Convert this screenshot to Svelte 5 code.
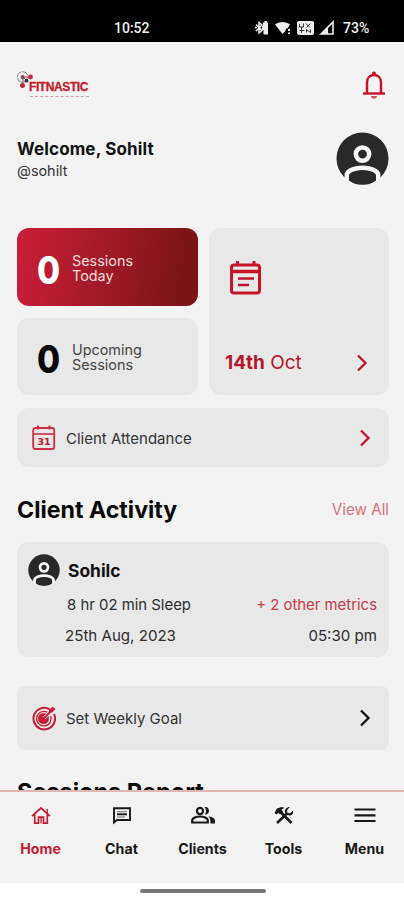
<script>
    const sessions = [
        { count: 0, lines: ['Sessions', 'Today'], active: true },
        { count: 0, lines: ['Upcoming', 'Sessions'], active: false }
    ];

    const tabs = ['Home', 'Chat', 'Clients', 'Tools', 'Menu'];
    let activeTab = $state('Home');
</script>

{#snippet chevron()}
    <svg class="chevron" width="12" height="18" viewBox="0 0 12 18">
        <path d="M2 1.5 9.5 9 2 16.5" fill="none" stroke="currentColor" stroke-width="2.3" />
    </svg>
{/snippet}

{#snippet avatar(size)}
    <svg class="avatar" width={size} height={size} viewBox="0 0 54 54">
        <circle cx="27" cy="27" r="26.5" fill="#292929" />
        <circle cx="27" cy="22.500" r="6.800" fill="#292929" stroke="#f7f7f7" stroke-width="4.600" />
        <path d="M11 50v-6c0-5 9-7.500 16-7.500S43 39 43 44v6" fill="none" stroke="#f7f7f7" stroke-width="4.600" />
        <path d="M13.500 46c0-4 7-6.500 13.500-6.500s13.500 2.500 13.500 6.500c0 3-2 7.500-13.500 7.500S13.500 49 13.500 46z" fill="#292929" />
    </svg>
{/snippet}

<div class="phone">
    <div class="status">
        <span class="time">10:52</span>
        <svg width="82" height="16" viewBox="0 0 82 16" fill="#eee">
            <path d="M2 4.500 8 10.500 5 13V2.500l3 2.500-6 6M1 7.500h2M8 7.500h2" fill="none" stroke="#eee" stroke-width="1.500" />
            <path d="M9 2.500h1.500V1H13v1.500h1v12H9.500V10H8V6h1z" />
            <path d="M21 4.500c4-3.500 11-3.500 15 0l-2.500 4H32l-.5 2.500-3 3z" />
            <path d="M34 9h2v2h-2zM34 12.500h2v1.500h-2z" />
            <rect x="43" y="1" width="17" height="14" rx="2" />
            <path d="M45.500 4v3h4V3.500M47.500 7v6M52 3.500l4 4M56.500 3.500l-4 4M45.500 10.500h5M52.500 12.500v-3l4 3v-3" fill="none" stroke="#333" stroke-width="1" />
            <path d="M67 14 79 2v12z" fill="none" stroke="#eee" stroke-width="1.600" />
            <path d="M67 14 74 7v7z" />
        </svg>
        <span class="battery">73%</span>
    </div>

    <main>
        <header>
            <div class="logo">
                <svg width="18" height="20" viewBox="0 0 18 20">
                    <circle cx="5.800" cy="6" r="5.300" fill="none" stroke="#7c8589" stroke-width="1" stroke-dasharray="7 1" />
                    <path d="M6 6h8M6 6v9M6 6l4 4" stroke="#a33c48" stroke-width="1" />
                    <circle cx="5.500" cy="6" r="2" fill="#7e4450" />
                    <circle cx="13.500" cy="6" r="2.400" fill="#bd2c3b" />
                    <circle cx="5.500" cy="14.500" r="2.500" fill="#bd2c3b" />
                    <circle cx="9.500" cy="9.700" r="1.900" fill="#26313e" />
                </svg>
                <div class="wordmark">
                    <b>FITNASTIC</b>
                    <i></i>
                </div>
            </div>
            <svg class="bell" width="22" height="28" viewBox="0 0 22 28">
                <path d="M4 22V11.500C4 7 7 4 11 4s7 3 7 7.500V22" fill="none" stroke="#c41426" stroke-width="2.500" />
                <path d="M0 22.500h22" stroke="#c41426" stroke-width="2.400" />
                <circle cx="11" cy="2.500" r="2" fill="#c41426" />
                <path d="M8 25h6c0 3.500-6 3.500-6 0z" fill="#cf5863" />
            </svg>
        </header>

        <section class="welcome">
            <div>
                <h1>Welcome, Sohilt</h1>
                <p>@sohilt</p>
            </div>
            {@render avatar(53)}
        </section>

        <section class="summary">
            <div class="counts">
                {#each sessions as s}
                    <div class="card count" class:active={s.active}>
                        <strong>{s.count}</strong>
                        <span>{s.lines[0]}<br />{s.lines[1]}</span>
                    </div>
                {/each}
            </div>
            <div class="card date">
                <svg width="32" height="35" viewBox="0 0 32 35" fill="none" stroke="#c41426">
                    <rect x="1.500" y="5" width="28" height="28" rx="2.500" stroke-width="3" />
                    <path d="M2 11.500h27" stroke-width="3.500" />
                    <path d="M7.500 1v5M24 1v5" stroke-width="3" />
                    <path d="M8 18.500h16M8 25h11" stroke-width="2.600" />
                </svg>
                <div class="date-row">
                    <span><b>14th</b> Oct</span>
                    {@render chevron()}
                </div>
            </div>
        </section>

        <div class="card link attendance">
            <svg width="24" height="26" viewBox="0 0 24 26" fill="none" stroke="#ce2f40">
                <rect x="1.200" y="3" width="21" height="21" rx="2" stroke-width="1.800" />
                <path d="M1 9h21" stroke-width="1.600" />
                <path d="M6 .5v4M17.500 .5v4" stroke-width="2" />
                <text x="12" y="19.800" text-anchor="middle" stroke="none" fill="#c41426">31</text>
            </svg>
            <span>Client Attendance</span>
            {@render chevron()}
        </div>

        <div class="section-head">
            <h2>Client Activity</h2>
            <a href="#all">View All</a>
        </div>

        <div class="card activity">
            <div class="person">
                {@render avatar(32)}
                <b>Sohilc</b>
            </div>
            <div class="row sleep">
                <span>8 hr 02 min Sleep</span>
                <span class="metrics">+ 2 other metrics</span>
            </div>
            <div class="row when">
                <span>25th Aug, 2023</span>
                <span class="hour">05:30 pm</span>
            </div>
        </div>

        <div class="card link goal">
            <svg width="24" height="26" viewBox="0 0 24 26" fill="none" stroke="#c81e35">
                <path d="M17.500 4.200A10.800 10.800 0 1 0 22 9" stroke-width="2" />
                <path d="M15.500 7.300A7.300 7.300 0 1 0 18.700 11" stroke-width="1.300" />
                <circle cx="11.500" cy="13.500" r="5.500" fill="#c81e35" stroke="none" />
                <path d="M12 13 18 7.500" stroke="#e8e8e8" stroke-width="3.200" />
                <path d="M11 14 22.500 3" stroke-width="1.900" />
                <path d="M17 8V4.700L21 1.500 21.500 3.500 23.500 4 20 7.500z" fill="#c81e35" stroke="none" />
            </svg>
            <span>Set Weekly Goal</span>
            {@render chevron()}
        </div>

        <h2 class="report">Sessions Report</h2>
    </main>

    <nav>
        {#each tabs as tab}
            <button class:current={tab === activeTab} onclick={() => (activeTab = tab)}>
                <svg width="24" height="20" viewBox="0 0 24 20" fill="none" stroke="currentColor">
                    {#if tab === 'Home'}
                        <path d="M3 10.200 12 2l9 8.200M5.700 8.500v8.700h3.800v-6h5v6h3.800V8.500" stroke-width="1.700" />
                        <path d="M12 12v5.500M18.300 3v5" stroke-width="1.300" />
                    {:else if tab === 'Chat'}
                        <path d="M4 16.500V2.200h16v11.800H7z" stroke-width="1.900" />
                        <path d="M7 5.700h10M7 11h8" stroke-width="1.100" stroke-opacity=".6" />
                        <path d="M7 8.300h10" stroke-width="1.900" />
                    {:else if tab === 'Clients'}
                        <circle cx="9" cy="5" r="3.100" stroke-width="2.200" />
                        <path d="M1.200 16.500v-2c0-2.700 4.500-4 7.800-4s7.800 1.300 7.800 4v2z" stroke-width="2.200" />
                        <path d="M13.500 1.200c5.500-1.500 6.500 8 0 7.400 2-2 2-5.400 0-7.400zM17.500 10.200c3 .5 6.500 1.800 6.500 4.300v3h-4.500c0-3-.2-5.300-2-7.300z" fill="currentColor" stroke="none" />
                    {:else if tab === 'Tools'}
                        <path d="M8 5.500 19.500 17" stroke-width="2.700" />
                        <path d="M2.500 7 5 2.500 9.500 1l3 .8L9.500 3.800l1.500 1.700-3 3-1.500-1.800L4.500 8.500z" fill="currentColor" stroke="none" />
                        <path d="M5 17 15.500 7" stroke-width="2.500" />
                        <path d="M17.800 1 15.200 4v3l3 .3 3-2.800c.5 4-2.500 5.800-5.500 4.600L13 7c-.8-3.500 1.500-6 4.800-6z" fill="currentColor" stroke="none" />
                    {:else}
                        <path d="M1.500 3.500h21M1.500 9.300h21M1.500 15h21" stroke-width="2.200" />
                    {/if}
                </svg>
                <span>{tab}</span>
            </button>
        {/each}
    </nav>

    <div class="gesture"><i></i></div>
</div>

<style>
    :global(body) { margin: 0; }

    .phone {
        display: flex;
        flex-direction: column;
        width: 404px;
        height: 900px;
        overflow: hidden;
        background: #f3f3f3;
        color: #111;
        font-family: Inter, 'Liberation Sans', sans-serif;
    }

    .phone * { box-sizing: border-box; }
    svg { display: block; flex: none; }
    h1, h2, p { margin: 0; }

    .status {
        display: flex;
        align-items: center;
        flex: none;
        height: 42px;
        padding: 14px 0 0 114px;
        background: #000;
        color: #eee;
        font: 500 14px/28px Roboto, sans-serif;
    }

    .time { width: 140px; }
    .battery { margin-left: 7px; font-size: 14px; }

    main { flex: 1; min-height: 0; padding: 0 15px 0 17px; overflow: hidden; }

    header { display: flex; justify-content: space-between; height: 90px; padding-top: 29px; }
    .bell { margin-right: 4px; }
    .logo { display: flex; align-items: flex-start; }
    .logo svg { margin-right: -6px; }
    .wordmark { padding-top: 9px; }
    .wordmark b {
        display: block;
        color: #c41c2d;
        font: 700 12px/15px 'Liberation Sans', sans-serif;
        letter-spacing: -0.4px;
        -webkit-text-stroke: 0.3px #c41c2d;
    }
    .wordmark i { display: block; width: 59px; margin: 1px 0 0 1px; border-top: 1px dashed #d79ba1; }

    .welcome { display: flex; justify-content: space-between; height: 96px; }
    h1 { margin-top: 6px; font-size: 17px; line-height: 22px; font-weight: 700; letter-spacing: 0.15px; }
    .welcome p { margin-top: 2px; font-size: 14.4px; line-height: 18px; color: #333; }

    .card { border-radius: 12px; background: #e8e8e8; }

    .summary { display: flex; gap: 11px; height: 167px; }
    .counts { display: flex; flex-direction: column; gap: 12px; width: 181px; }
    .count { display: flex; align-items: center; height: 77px; padding: 4px 0 0 20px; color: #444; }
    .count strong { width: 35px; font-size: 38px; font-weight: 800; color: #080808; transform: scaleX(0.88); transform-origin: left; }
    .count span { padding-bottom: 3px; font-size: 14.4px; line-height: 15px; }
    .count.active { height: 78px; padding-top: 6px; background: linear-gradient(100deg, #c81e37 5%, #7c1517 90%); color: #f5dcdd; }
    .count.active span { padding-bottom: 4px; line-height: 15.5px; }
    .count.active strong { color: #fff; }

    .date { width: 180px; padding: 32px 0 0 21px; }
    .date-row { display: flex; justify-content: space-between; align-items: center; margin: 56px 21px 0 -5px; color: #b5182b; font-size: 19px; line-height: 24px; }

    .link { display: flex; align-items: center; width: 372px; padding: 0 18px 0 15px; font-size: 15px; color: #333; }
    .link span { flex: 1; margin-left: 10px; padding-top: 1px; }
    .link text { font: 700 9.5px 'DejaVu Sans', sans-serif; }
    .attendance { height: 59px; margin-top: 13px; }
    .attendance .chevron { color: #c41426; }

    .section-head { display: flex; justify-content: space-between; align-items: center; width: 372px; height: 75px; padding-top: 11px; }
    h2 { font-size: 23.2px; line-height: 28px; font-weight: 700; color: #080808; }
    a { margin-bottom: 2px; color: #d5727a; font-size: 15.2px; text-decoration: none; }

    .activity { width: 372px; height: 115px; padding: 12px 12px 0 11px; color: #2d2d2d; font-size: 14.9px; }
    .person { display: flex; align-items: center; gap: 8px; height: 32px; font-size: 17.4px; color: #111; }
    .row { display: flex; justify-content: space-between; line-height: 20px; }
    .sleep { margin-top: 9px; padding-left: 39px; }
    .when { margin-top: 11px; padding-left: 37px; }
    .when span { font-size: 15.1px; }
    .metrics { color: #c83a4b; }

    .goal { height: 64px; margin-top: 29px; border-radius: 8px; }
    .goal .chevron { color: #111; }

    .report { margin-top: 28px; font-size: 23.5px; }

    nav {
        display: flex;
        flex: none;
        height: 93px;
        border-top: 2px solid #e0b7af;
        background: #f3f3f3;
    }

    nav button {
        display: flex;
        flex-direction: column;
        align-items: center;
        width: 81px;
        flex: none;
        padding: 14px 0 0;
        border: 0;
        background: none;
        color: #191919;
        font: 700 14.2px/18px Inter, sans-serif;
    }

    nav span { margin-top: 14px; }
    nav .current { color: #c41c31; }

    .gesture { flex: none; height: 17px; padding-top: 6px; background: #fff; }
    .gesture i { display: block; width: 126px; height: 4px; margin-left: 140px; border-radius: 2px; background: #777; }
</style>
